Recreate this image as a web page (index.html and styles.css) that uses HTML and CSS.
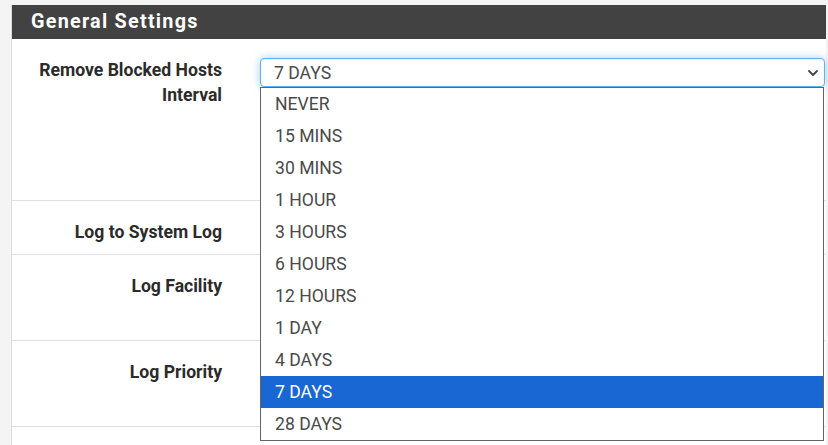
FILE: index.html
```html
<!DOCTYPE html>
<html lang="en">
<head>
<meta charset="utf-8">
<title>General Settings</title>
<link rel="stylesheet" href="styles.css">
</head>
<body>
<section class="panel">
  <h2 class="panel-title">General Settings</h2>
  <div class="panel-body">
    <div class="form-row row-tall">
      <div class="row-label">Remove Blocked Hosts Interval</div>
      <div class="row-control">
        <div class="select-wrap">
          <div class="select">
            <span>7 DAYS</span>
            <svg class="chevron" width="10" height="6" viewBox="0 0 10 6"><path d="M1 1 L5 5 L9 1" fill="none" stroke="#444" stroke-width="1.8" stroke-linecap="round" stroke-linejoin="round"/></svg>
          </div>
          <ul class="select-list">
            <li>NEVER</li>
            <li>15 MINS</li>
            <li>30 MINS</li>
            <li>1 HOUR</li>
            <li>3 HOURS</li>
            <li>6 HOURS</li>
            <li>12 HOURS</li>
            <li>1 DAY</li>
            <li>4 DAYS</li>
            <li class="selected">7 DAYS</li>
            <li>28 DAYS</li>
          </ul>
        </div>
      </div>
    </div>
    <div class="form-row row-short">
      <div class="row-label">Log to System Log</div>
      <div class="row-control"></div>
    </div>
    <div class="form-row row-mid">
      <div class="row-label">Log Facility</div>
      <div class="row-control"></div>
    </div>
    <div class="form-row row-mid">
      <div class="row-label">Log Priority</div>
      <div class="row-control"></div>
    </div>
    <div class="form-row row-mid">
      <div class="row-label"></div>
      <div class="row-control"></div>
    </div>
  </div>
</section>
</body>
</html>
```

FILE: styles.css
```css
html, body {
  margin: 0;
  padding: 0;
  background: #f4f4f4;
  font-family: Roboto, "Liberation Sans", Arial, sans-serif;
  overflow: hidden;
  height: 445px;
}

.panel {
  margin: 5px 2px 0 11px;
  background: #fff;
  border-left: 1px solid #dcdcdc;
}

.panel-title {
  margin: 0;
  height: 34px;
  line-height: 34px;
  padding-left: 19px;
  background: #424242;
  color: #fff;
  font-size: 19.8px;
  font-weight: 700;
  letter-spacing: 1.25px;
}

.form-row {
  display: grid;
  grid-template-columns: 210px 1fr;
  column-gap: 38px;
  border-bottom: 1px solid #e1e1e1;
  box-sizing: border-box;
}

.row-tall { min-height: 162px; }
.row-short { min-height: 54px; }
.row-mid { min-height: 86px; }

.row-label {
  padding-top: 19px;
  text-align: right;
  font-size: 17.6px;
  line-height: 25px;
  font-weight: 700;
  color: #2b2b2b;
}

.row-control {
  padding-top: 19px;
  min-width: 0;
}

.select-wrap {
  position: relative;
  z-index: 2;
}

.select {
  height: 29px;
  box-sizing: border-box;
  border: 1px solid #66afe9;
  border-radius: 4px;
  box-shadow: inset 0 1px 1px rgba(0,0,0,.075), 0 0 8px rgba(102,175,233,.6);
  display: flex;
  align-items: center;
  justify-content: space-between;
  padding: 0 6px 0 13px;
  font-size: 17.6px;
  color: #4a4a4a;
  background: #fff;
  margin-right: 1px;
}

.chevron {
  display: block;
}

.select-list {
  position: absolute;
  top: 100%;
  left: 0;
  right: 2px;
  margin: 0;
  padding: 0;
  list-style: none;
  background: #fff;
  border: 1px solid #646464;
}

.select-list li {
  height: 32px;
  line-height: 32px;
  padding-left: 14px;
  font-size: 17.6px;
  color: #4a4a4a;
}

.select-list li.selected {
  background: #1967d2;
  color: #fff;
}
```
